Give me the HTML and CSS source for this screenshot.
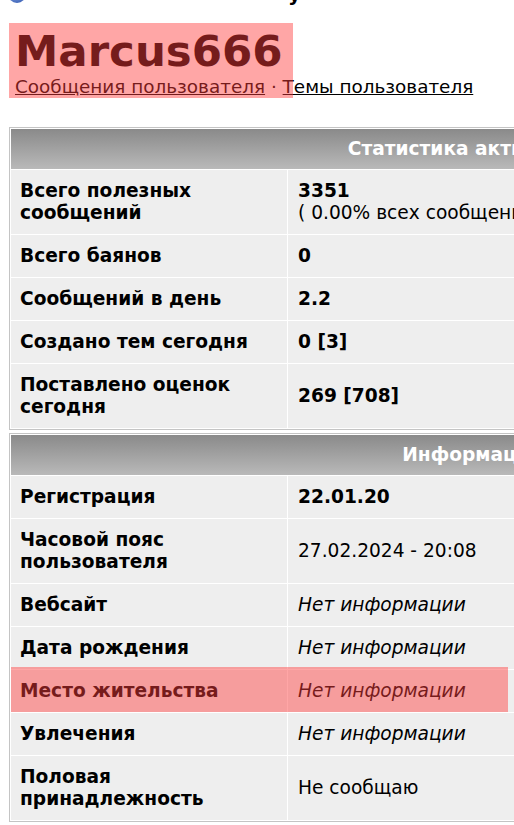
FILE: index.html
```html
<!DOCTYPE html>
<html lang="ru">
<head>
<meta charset="utf-8">
<title>Marcus666</title>
<link rel="stylesheet" href="styles.css">
</head>
<body>
<div class="page">
  <div class="topbar">
    <svg class="ico" width="20" height="20" viewBox="0 0 20 20"><defs><radialGradient id="g" cx="40%" cy="35%" r="70%"><stop offset="0" stop-color="#9ab8ec"/><stop offset="1" stop-color="#3d63b8"/></radialGradient></defs><circle cx="10" cy="10" r="9" fill="url(#g)"/></svg>
    <span class="frag">у</span>
  </div>
  <div class="profile-head">
    <h1 class="name">Marcus666</h1>
    <div class="links"><a href="#">Сообщения пользователя</a> · <a href="#">Темы пользователя</a></div>
    <span class="mark mark-head"></span>
  </div>

  <table class="stats">
    <colgroup><col class="c1"><col class="c2"></colgroup>
    <tr><th colspan="2" class="head">Статистика активности</th></tr>
    <tr><td class="label">Всего полезных сообщений</td><td class="val"><b>3351</b><br>( 0.00% всех сообщений )</td></tr>
    <tr><td class="label">Всего баянов</td><td class="val"><b>0</b></td></tr>
    <tr><td class="label">Сообщений в день</td><td class="val"><b>2.2</b></td></tr>
    <tr><td class="label">Создано тем сегодня</td><td class="val"><b>0 [3]</b></td></tr>
    <tr><td class="label">Поставлено оценок сегодня</td><td class="val"><b>269 [708]</b></td></tr>
  </table>

  <table class="stats second">
    <colgroup><col class="c1"><col class="c2"></colgroup>
    <tr><th colspan="2" class="head">Информация</th></tr>
    <tr><td class="label">Регистрация</td><td class="val"><b>22.01.20</b></td></tr>
    <tr><td class="label">Часовой пояс пользователя</td><td class="val">27.02.2024 - 20:08</td></tr>
    <tr><td class="label">Вебсайт</td><td class="val"><i>Нет информации</i></td></tr>
    <tr><td class="label">Дата рождения</td><td class="val"><i>Нет информации</i></td></tr>
    <tr><td class="label rel">Место жительства<span class="mark mark-row"></span></td><td class="val"><i>Нет информации</i></td></tr>
    <tr><td class="label">Увлечения</td><td class="val"><i>Нет информации</i></td></tr>
    <tr><td class="label">Половая принадлежность</td><td class="val">Не сообщаю</td></tr>
  </table>
</div>
</body>
</html>
```
FILE: styles.css
```css
html, body {
  margin: 0;
  padding: 0;
  overflow: hidden;
  background: #ffffff;
}
body {
  font-family: "DejaVu Sans", Verdana, sans-serif;
  color: #000;
}
.page {
  overflow: hidden;
  padding-left: 9px;
}
.topbar {
  height: 5px;
  overflow: hidden;
  display: flex;
  align-items: flex-start;
}
.ico {
  margin-top: -16px;
  margin-left: -2px;
  flex: none;
}
.frag {
  margin-top: -16px;
  margin-left: 261px;
  font-size: 20px;
  line-height: 20px;
  font-weight: bold;
}
.profile-head {
  position: relative;
  padding-top: 22px;
}
.name {
  margin: 0 0 0 6px;
  font-size: 43.5px;
  line-height: 49px;
  font-weight: bold;
}
.links {
  margin-left: 6px;
  font-size: 18.4px;
  line-height: 22px;
}
.links a {
  color: #000;
  text-decoration: underline;
}
.mark {
  position: absolute;
  background: rgba(255, 62, 62, 0.46);
  pointer-events: none;
  z-index: 2;
}
.mark-head {
  left: 0;
  top: 18px;
  width: 284px;
  height: 75px;
}
.stats {
  margin-top: 29px;
  width: 926px;
  table-layout: fixed;
  border: 1px solid #c4c4c4;
  border-collapse: separate;
  border-spacing: 1px;
  font-size: 18.6px;
  line-height: 22px;
}
.c1 {
  width: 276px;
}
.stats.second {
  margin-top: 3px;
}
.head {
  padding: 9px 9px 9px;
  background: linear-gradient(#8a8a8a, #b9b9b9);
  color: #fff;
  font-weight: bold;
  text-align: center;
}
.label {
  padding: 10px 9px;
  background: #eeeeee;
  font-weight: bold;
  vertical-align: middle;
  text-align: left;
}
.val {
  padding: 10px 9px 10px 10px;
  background: #eeeeee;
  vertical-align: middle;
  white-space: nowrap;
}
.rel {
  position: relative;
}
.mark-row {
  left: 0;
  top: -3px;
  width: 497px;
  height: 45px;
}
```
